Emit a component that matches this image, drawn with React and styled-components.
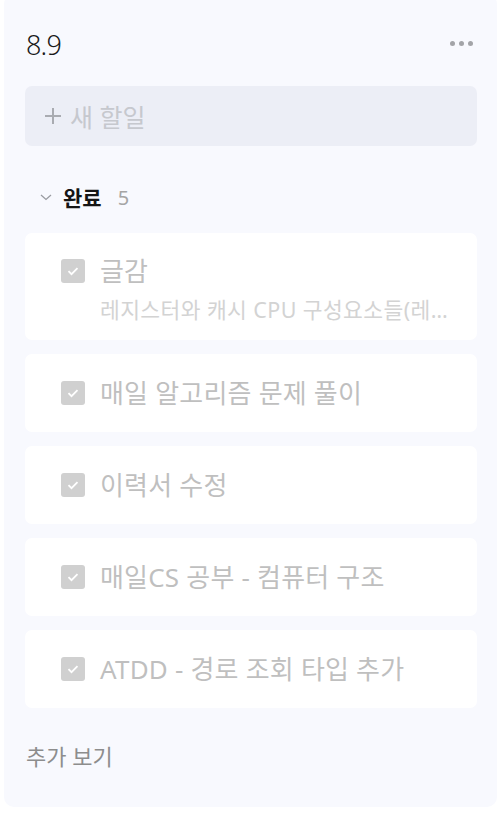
import React from 'react';
import styled, { createGlobalStyle } from 'styled-components';

const GlobalStyle = createGlobalStyle`
  html, body {
    margin: 0;
    padding: 0;
    background: #ffffff;
  }
  body {
    font-family: "Noto Sans", "Noto Sans CJK KR", sans-serif;
  }
`;

const todos = [
  { title: '글감', memo: '레지스터와 캐시 CPU 구성요소들(레…' },
  { title: '매일 알고리즘 문제 풀이' },
  { title: '이력서 수정' },
  { title: '매일CS 공부 - 컴퓨터 구조' },
  { title: 'ATDD - 경로 조회 타입 추가' },
];

export default function App() {
  return (
    <>
      <GlobalStyle />
      <Panel>
        <Header>
          <DateTitle>8.9</DateTitle>
          <MoreBtn>
            <Dot />
            <Dot />
            <Dot />
          </MoreBtn>
        </Header>
        <NewTodo>
          <svg width="18" height="18" viewBox="0 0 18 18">
            <path d="M9 1v16M1 9h16" stroke="#a9abb1" strokeWidth="2" />
          </svg>
          <span>새 할일</span>
        </NewTodo>
        <SectionHead>
          <svg width="14" height="10" viewBox="0 0 14 10">
            <path d="M2 3l5 4.5L12 3" stroke="#9a9ca2" strokeWidth="1.3" fill="none" />
          </svg>
          <SectionTitle>완료</SectionTitle>
          <Count>5</Count>
        </SectionHead>
        <List>
          {todos.map((el, i) => (
            <Card key={i} tall={!!el.memo}>
              <CheckBox tall={!!el.memo}>
                <svg width="16" height="16" viewBox="0 0 16 16">
                  <path d="M3.5 8.2l3 3 6-6" stroke="#fff" strokeWidth="1.8" fill="none" />
                </svg>
              </CheckBox>
              <TextCol>
                <Title>{el.title}</Title>
                {el.memo && <Memo>{el.memo}</Memo>}
              </TextCol>
            </Card>
          ))}
        </List>
        <MoreLink>추가 보기</MoreLink>
      </Panel>
    </>
  );
}

const Panel = styled.div`
  box-sizing: border-box;
  margin: -6px 3px 0 4px;
  height: 813px;
  padding: 32px 20px 0 21px;
  background: #f8f9fe;
  border-radius: 10px;
`;

const Header = styled.div`
  display: flex;
  justify-content: space-between;
  align-items: center;
  height: 36px;
  padding-left: 1px;
`;

const DateTitle = styled.div`
  font-size: 27px;
  font-weight: 300;
  color: #1a1a1a;
  letter-spacing: -0.8px;
`;

const MoreBtn = styled.div`
  display: flex;
  gap: 4px;
  margin-right: 4px;
  margin-top: -2px;
`;

const Dot = styled.span`
  width: 5px;
  height: 5px;
  border-radius: 50%;
  background: #a3a4a8;
`;

const NewTodo = styled.div`
  margin-top: 24px;
  height: 60px;
  border-radius: 7px;
  background: #eceef6;
  display: flex;
  align-items: center;
  gap: 8px;
  padding-left: 19px;
  font-size: 25px;
  color: #c6c8ce;
`;

const SectionHead = styled.div`
  display: flex;
  align-items: center;
  margin-top: 36px;
  padding-left: 14px;
  height: 30px;
  svg {
    margin-right: 10px;
  }
`;

const SectionTitle = styled.span`
  font-size: 21px;
  font-weight: 700;
  color: #151515;
`;

const Count = styled.span`
  font-size: 20px;
  color: #a5a5a5;
  margin-left: 16px;
`;

const List = styled.div`
  display: flex;
  flex-direction: column;
  gap: 14px;
  margin-top: 21px;
`;

const Card = styled.div`
  display: flex;
  align-items: ${(p) => (p.tall ? 'flex-start' : 'center')};
  height: ${(p) => (p.tall ? '107px' : '78px')};
  box-sizing: border-box;
  padding: ${(p) => (p.tall ? '22px 0 0 36px' : '0 0 0 36px')};
  background: #ffffff;
  border-radius: 7px;
`;

const CheckBox = styled.div`
  width: 24px;
  height: 24px;
  border-radius: 3px;
  background: #d0d0d0;
  display: flex;
  align-items: center;
  justify-content: center;
  flex-shrink: 0;
  margin-top: ${(p) => (p.tall ? '4px' : '0')};
`;

const TextCol = styled.div`
  display: flex;
  flex-direction: column;
  margin-left: 15px;
  min-width: 0;
  flex: 1;
  padding-right: 20px;
`;

const Title = styled.div`
  font-size: 26px;
  line-height: 32px;
  letter-spacing: 0.2px;
  color: #bfbfbf;
  white-space: nowrap;
`;

const Memo = styled.div`
  margin-top: 8px;
  font-size: 21.5px;
  line-height: 30px;
  letter-spacing: 0.4px;
  color: #d3d3d3;
  white-space: nowrap;
`;

const MoreLink = styled.div`
  margin-top: 31px;
  padding-left: 1px;
  font-size: 22px;
  color: #8d8d8d;
`;
